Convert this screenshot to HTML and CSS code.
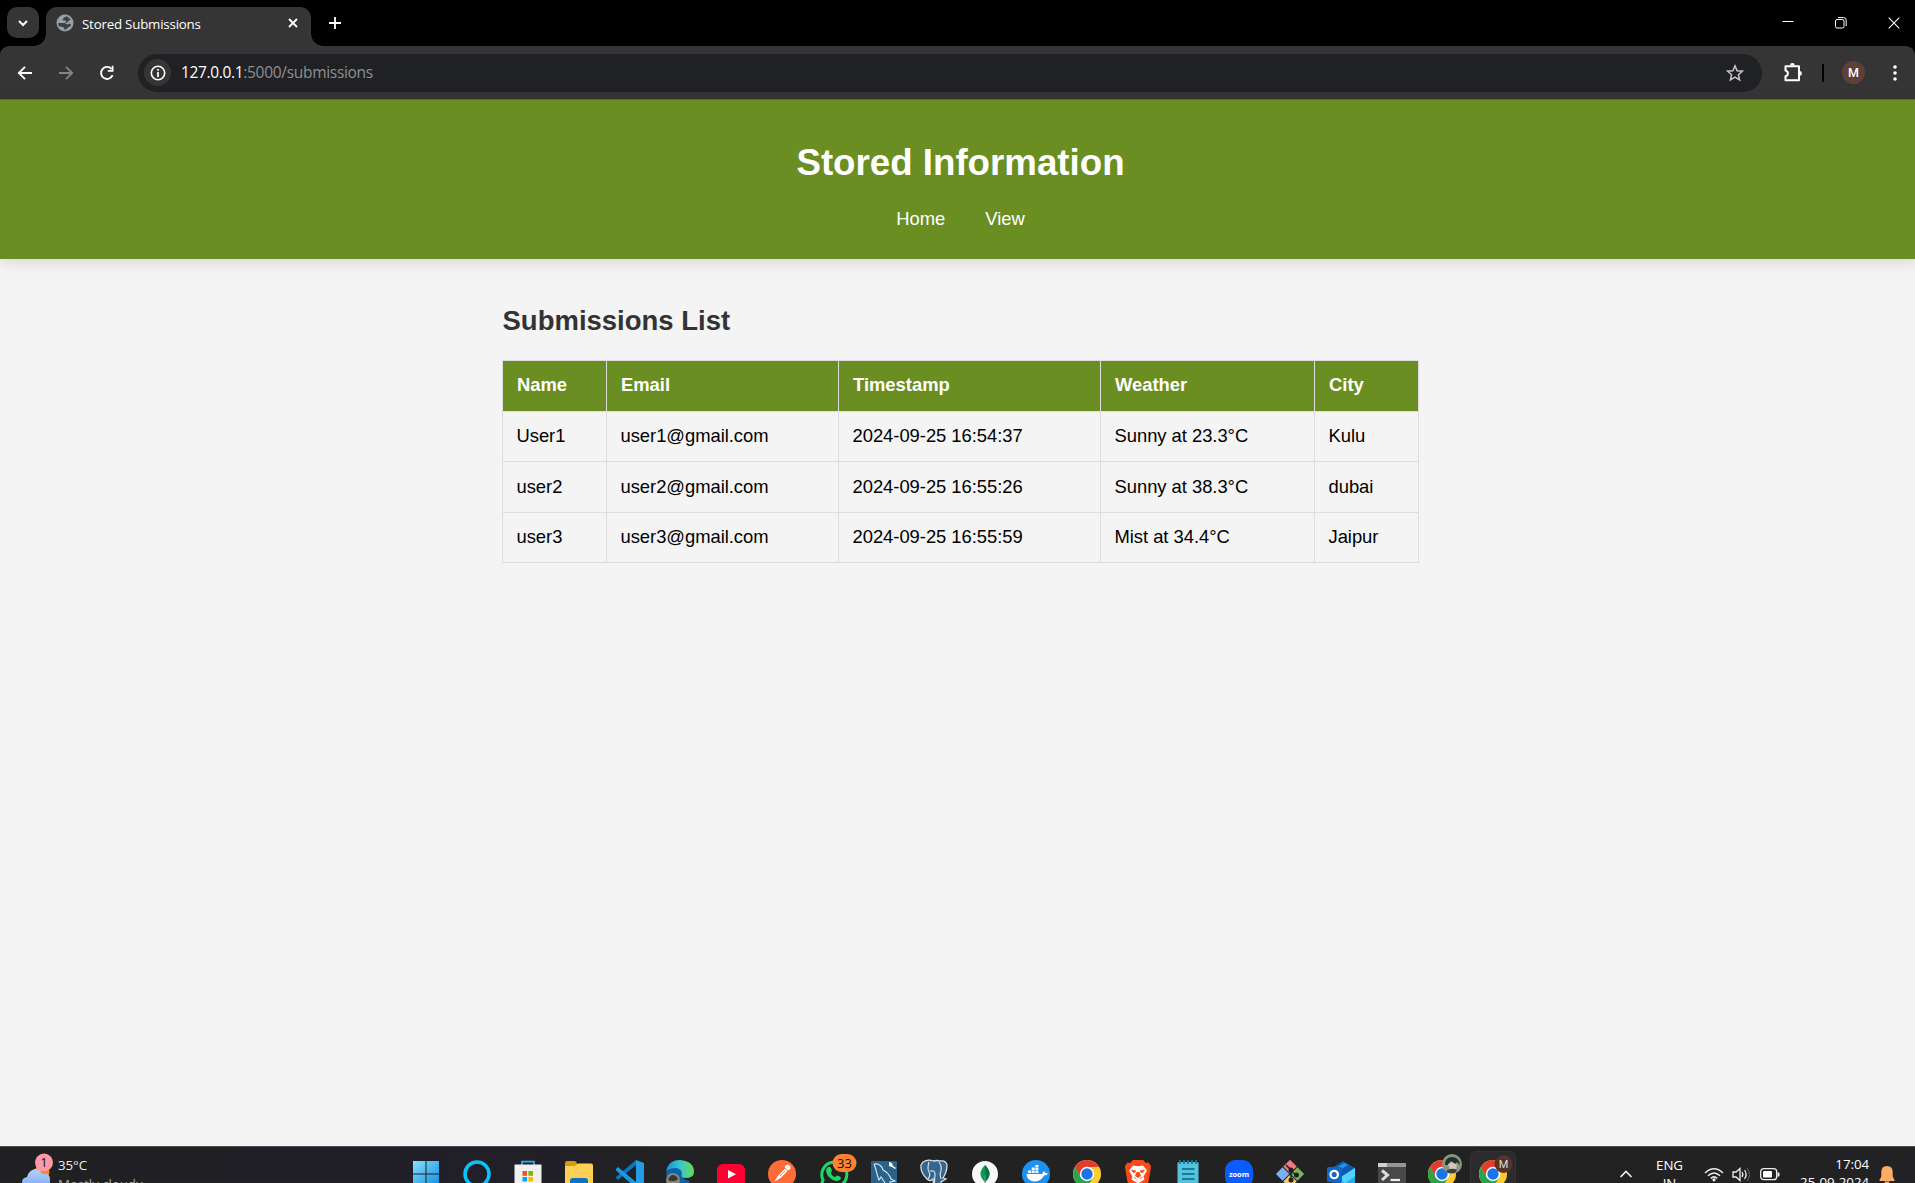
FILE: index.html
```html
<!DOCTYPE html>
<html lang="en">
<head>
<meta charset="utf-8">
<title>Stored Submissions</title>
<link rel="stylesheet" href="styles.css">
</head>
<body>
<div class="screen">
  <div class="tabstrip">
    <div class="tab-search"><svg width="12" height="12" viewBox="0 0 12 12"><path d="M2 4l4 4 4-4" fill="none" stroke="#fff" stroke-width="2"/></svg></div>
    <div class="tab">
      <svg class="favicon" width="18" height="18" viewBox="0 0 18 18"><circle cx="9" cy="9" r="8.500" fill="#9aa0a6"/><path d="M10.500 2.300Q7 3.500 6.500 6q2 .8 3.700.5.300 2-1.700 2.500H2.200q-.2 2 .8 3.500 3-.3 5 1.300l.5 2q3-.2 3.200-2.300 3-.5 3.300-3.500-2.500-.6-3.500.5-2-.3-2.500-1.200 3-.3 3.500-2.500l2.300-1Q13 3.500 10.500 2.300z" fill="#3c4043"/></svg>
      <span class="tab-title">Stored Submissions</span>
      <svg class="tab-close" width="10" height="10" viewBox="0 0 10 10"><path d="M1 1l8 8M9 1L1 9" stroke="#fff" stroke-width="1.800"/></svg>
    </div>
    <svg class="new-tab" width="12" height="12" viewBox="0 0 12 12"><path d="M6 0v12M0 6h12" stroke="#fff" stroke-width="1.800"/></svg>
    <div class="window-controls">
      <svg width="12" height="12" viewBox="0 0 12 12"><path d="M.5 4.500h11" stroke="#fff"/></svg>
      <svg width="12" height="12" viewBox="0 0 12 12"><rect x=".5" y="2.500" width="8.500" height="8.500" rx="1.500" fill="none" stroke="#fff"/><path d="M3 .6h5.500q2.700 0 2.700 2.700V9" fill="none" stroke="#fff"/></svg>
      <svg width="12" height="12" viewBox="0 0 12 12"><path d="M.7.700l10.600 10.600M11.300.700L.7 11.300" stroke="#fff" stroke-width="1.100"/></svg>
    </div>
  </div>
  <div class="toolbar">
    <div class="nav-buttons">
      <svg width="16" height="16" viewBox="0 0 16 16"><path d="M15 8H2M8 1.800L1.800 8 8 14.200" fill="none" stroke="#fff" stroke-width="1.800"/></svg>
      <svg width="16" height="16" viewBox="0 0 16 16"><path d="M1 8h13M8 1.800L14.200 8 8 14.200" fill="none" stroke="#858585" stroke-width="1.800"/></svg>
      <svg width="16" height="16" viewBox="0 0 16 16"><path d="M13.600 10.200A6 6 0 1 1 12.600 4" fill="none" stroke="#fff" stroke-width="1.900"/><path d="M14.500.7v6.100H8.800V5h3.900V.7z" fill="#fff"/></svg>
    </div>
    <div class="omnibox">
      <div class="site-info"><svg width="16" height="16" viewBox="0 0 16 16"><circle cx="8" cy="8" r="6.700" fill="none" stroke="#fff" stroke-width="1.600"/><path d="M8 7v5M8 4v1.800" stroke="#fff" stroke-width="1.700"/></svg></div>
      <div class="url"><span class="host">127.0.0.1</span><span class="path">:5000/submissions</span></div>
      <svg class="star" width="18" height="18" viewBox="0 0 18 18"><path d="M9 1.800l2.100 4.900 5.300.5-4 3.500 1.200 5.200L9 13.200l-4.600 2.700 1.200-5.200-4-3.500 5.300-.5z" fill="none" stroke="#c7c7c7" stroke-width="1.500"/></svg>
    </div>
    <svg class="extensions" width="20" height="20" viewBox="0 0 20 20"><path d="M2.500 3.200H16V17.300H2.500v-4q2.400-.8 2.400-2.900T2.500 7.500z" fill="none" stroke="#fff" stroke-width="2" stroke-linejoin="round"/><path d="M7 2.500a2.400 2.400 0 0 1 4.800 0zM16.500 8a2.300 2.300 0 0 1 0 4.800z" fill="#fff"/></svg>
    <div class="divider"></div>
    <div class="profile">M</div>
    <svg class="menu" width="4" height="16" viewBox="0 0 4 16"><g fill="#fff"><circle cx="2" cy="2" r="1.800"/><circle cx="2" cy="8" r="1.800"/><circle cx="2" cy="14" r="1.800"/></g></svg>
  </div>

  <div class="page">
    <header class="site-header">
      <h1>Stored Information</h1>
      <nav><a>Home</a><a>View</a></nav>
    </header>
    <main>
      <h2>Submissions List</h2>
      <table>
        <colgroup><col class="c-name"><col class="c-email"><col class="c-time"><col class="c-weather"><col class="c-city"></colgroup>
        <thead><tr><th>Name</th><th>Email</th><th>Timestamp</th><th>Weather</th><th>City</th></tr></thead>
        <tbody>
          <tr><td>User1</td><td>user1@gmail.com</td><td>2024-09-25 16:54:37</td><td>Sunny at 23.3°C</td><td>Kulu</td></tr>
          <tr><td>user2</td><td>user2@gmail.com</td><td>2024-09-25 16:55:26</td><td>Sunny at 38.3°C</td><td>dubai</td></tr>
          <tr><td>user3</td><td>user3@gmail.com</td><td>2024-09-25 16:55:59</td><td>Mist at 34.4°C</td><td>Jaipur</td></tr>
        </tbody>
      </table>
    </main>
  </div>

  <div class="taskbar">
    <div class="widget">
      <svg width="32" height="36" viewBox="0 0 32 36"><defs><linearGradient id="cl" x1="0" y1="0" x2="0" y2="1"><stop offset="0" stop-color="#b4d2fb"/><stop offset="1" stop-color="#7fabf0"/></linearGradient></defs><circle cx="20" cy="19" r="7.500" fill="#f58a1f"/><path d="M6 34q-6 0-6-5 0-4 5-5 2-7 8-8 5 0 7 5 8-1 8 5v8z" fill="url(#cl)"/><circle cx="22" cy="9.500" r="9" fill="#ff99a4"/><text x="22" y="14" text-anchor="middle" class="badge-text">1</text></svg>
      <div class="weather"><div>35°C</div><div class="dim">Mostly cloudy</div></div>
    </div>
    <div class="apps">
      <div><svg viewBox="0 0 28 28"><defs><linearGradient id="wn" x1="0" y1="0" x2="1" y2="1"><stop offset="0" stop-color="#87e0fc"/><stop offset="1" stop-color="#0c8ce0"/></linearGradient></defs><path d="M1 1h12.500v12.500H1zM14.500 1H27v12.500H14.500zM1 14.500h12.500V27H1zM14.500 14.500H27V27H14.500z" fill="url(#wn)"/></svg></div>
      <div><svg viewBox="0 0 28 28"><circle cx="14" cy="14" r="12" fill="none" stroke="#08c4fb" stroke-width="3.500"/></svg></div>
      <div><svg viewBox="0 0 28 28"><path d="M8 5V1.700h12V5" fill="none" stroke="#28b1ef" stroke-width="1.700"/><path d="M.5 4.500h27V28H.5z" fill="#f1f1f1"/><path fill="#f25022" d="M8.500 11H13v4.800H8.500z"/><path fill="#7fba00" d="M14.300 11h4.700v4.800h-4.700z"/><path fill="#00a4ef" d="M8.500 17H13v4.500H8.500z"/><path fill="#ffb900" d="M14.300 17h4.700v4.500h-4.700z"/></svg></div>
      <div><svg viewBox="0 0 28 28"><path d="M0 3q0-2 2-2h8l2 2v5H0z" fill="#d89a09"/><path d="M0 6h10l3-2.500h13q2 0 2 2V28H0z" fill="#fecf55"/><path d="M5 28v-7q0-3 3-3h12q3 0 3 3v7z" fill="#0e72c6"/><path d="M9 28v-5h11v5z" fill="#074c8f"/></svg></div>
      <div><svg viewBox="0 0 28 28"><path d="M20 5L2 20l-2-2V17L20 0z" fill="#0877bd"/><path d="M2 7l18 15v6L0 10.500V9z" fill="#149ae2"/><path d="M20 0l8 3v22l-8 3-3-2 3-4V8z" fill="#239de5"/></svg></div>
      <div><svg viewBox="0 0 28 28"><defs><linearGradient id="ed"><stop offset="0" stop-color="#1590dc"/><stop offset=".5" stop-color="#37c6ce"/><stop offset="1" stop-color="#65dc52"/></linearGradient></defs><path d="M0 14Q3 5 13 8q6 2 4 8-1 4 7 5-5 7-10 7Q2 28 0 14z" fill="#0c61ad"/><path d="M0 12Q2 0 14 0q14 1 14 12 0 6-9 6-5-1-3-4 0-5-6-6-7 0-10 4z" fill="url(#ed)"/><circle cx="7" cy="20" r="7" fill="#8b8471"/><path d="M2 20q2-5 5-5t5 4l-3 2H5z" fill="#34383a"/></svg></div>
      <div><svg viewBox="0 0 28 28"><rect y="4" width="28" height="23" rx="6" fill="#ff0033"/><path d="M11 10l8 4.200-8 4.300z" fill="#fff"/></svg></div>
      <div><svg viewBox="0 0 28 28"><circle cx="14" cy="14" r="14" fill="#ff6c37"/><path d="M6.500 21.500l3-5 7.500-8 2.500 2.500-7 7z" fill="#fff"/><circle cx="19.700" cy="7.500" r="2.800" fill="#fff"/><path d="M12 16l5-5M17 8l3 3" stroke="#ff6c37" stroke-width=".9"/></svg></div>
      <div><svg viewBox="0 0 28 28"><path d="M1.500 27L4 20A12.500 12.500 0 1 1 10 26z" fill="none" stroke="#1fd564" stroke-width="3"/><path d="M9 7q3-1 4 4l-1.300 2q1.300 3 4.300 4l2-1.500q4 1 4 3-2 4-8 1.500-7-4-7-10 .5-2 2-3z" fill="#1fd564"/><rect x="13.500" y="-6" width="24" height="18" rx="9" fill="#ff8232"/><text x="25.500" y="7.500" text-anchor="middle" class="badge-text">33</text></svg></div>
      <div><svg viewBox="0 0 28 28"><rect x="1" y="1" width="26" height="29" rx="1" fill="#27638a"/><path d="M4 4q7-1 9 6 6 3 8 9l4 2-5 1 2 6M4 4q2 5 3 10l2 6 2-3 4 6" fill="none" stroke="#dce7ee" stroke-width="1.100"/><path d="M19 2l3 1 1 3 3 2-1 1-3-2-3-1z" fill="#fff"/></svg></div>
      <div><svg viewBox="0 0 28 28"><path d="M3 2Q8-1 13 1q4-1 7 0 6-1 7 4 0 7-4 13l3 1-5 3-1 6h-6l-1-9q-3 3-6 0Q0 12 1 5z" fill="#35668f" stroke="#d6e0e8" stroke-width="1.300"/><path d="M9 2Q7 9 9 12t-1 7M19 2q4 5 1 12l1 5M10 11q5-1 5 3l-1 14" fill="none" stroke="#d6e0e8" stroke-width="1.200"/></svg></div>
      <div><svg viewBox="0 0 28 28"><circle cx="14" cy="14" r="13" fill="#f8f8f8"/><path d="M14 5q9 9 0 17-9-8 0-17z" fill="#0b9954"/><path d="M14 5q9 9 0 17z" fill="#08744a"/><path d="M14 15v10" stroke="#768d80"/></svg></div>
      <div><svg viewBox="0 0 28 28"><circle cx="14" cy="14" r="14" fill="#1d91f0"/><path d="M4.500 14H20l2-3 1.500 2 2.500.5q-1 2-4 2-3 6-10 6-7-.5-7.500-7.500zM6 10.500h3V13H6zM9.700 10.500h3V13h-3zM13.400 10.500h3V13h-3zM9.700 7.500h3V10h-3zM13.400 7.500h3V10h-3zM13.400 5h3v2h-3z" fill="#fff"/></svg></div>
      <div><svg viewBox="0 0 28 28"><g id="chrome"><circle cx="14" cy="14" r="14" fill="#ffcb2f"/><path d="M1.900 7A14 14 0 0 1 26.100 7H14L8 17.500z" fill="#e33b2e"/><path d="M1.900 7A14 14 0 0 0 14 28l6-10.500H8z" fill="#2ba24c"/><circle cx="14" cy="14" r="7.200" fill="#fff"/><circle cx="14" cy="14" r="5.700" fill="#1a73e8"/></g></svg></div>
      <div><svg viewBox="0 0 28 28"><path d="M9 0h10l3 3 2.500-.5L27 6l-.5 4-2 12-6 6h-9l-6-6-2-12L1 6l2.500-3.500L6 3z" fill="#fb4a17"/><path d="M9 5.500l5 .8 5-.8 4 5-3.500 6 1 3L14 23.500l-6.500-4 1-3L5 10.500z" fill="#fff"/><path d="M7.500 10l4.500 1-2 2zM20.500 10l-4.500 1 2 2zM12.500 12.500h3l1 3.500-2.500 1.500-2.500-1.500zM10 17l2.500 2M18 17l-2.500 2" fill="#fb4a17" stroke="#fb4a17" stroke-width=".8"/></svg></div>
      <div><svg viewBox="0 0 28 28"><rect x="3.500" y="2" width="21" height="28" rx="1.500" fill="#55c2de"/><path d="M8 9h12.500M8 14h12.500M8 19h12.500" stroke="#086183" stroke-width="1.700"/><path d="M6 0v4M10 0v4M14 0v4M18 0v4M22 0v4" stroke="#16779a" stroke-width="1.800"/></svg></div>
      <div><svg viewBox="0 0 28 28"><rect width="28" height="28" rx="11" fill="#0b5cff"/><text x="14" y="16.500" text-anchor="middle" class="zoom-text" textLength="20">zoom</text></svg></div>
      <div><svg viewBox="0 0 28 28"><g transform="rotate(45 14 14)"><path d="M4 4h9.500v9.500H4z" fill="#f07a7c"/><path d="M14.500 4H24v9.500h-9.500z" fill="#7ab657"/><path d="M4 14.500h9.500V24H4z" fill="#7badf8"/><path d="M14.500 14.500H24V24h-9.500z" fill="#f0ca68"/></g><path d="M10 5l5 5v12M15 11l5 4" stroke="#211f22" stroke-width="1.500" fill="none"/><g fill="#211f22"><circle cx="15" cy="10" r="2.500"/><circle cx="20.500" cy="15" r="2.500"/><circle cx="15" cy="20" r="2.500"/></g></svg></div>
      <div><svg viewBox="0 0 28 28"><path d="M5 8L16 1l12 7v20H5z" fill="#0a5bb1"/><path d="M9 8l8-5 4 2-12 7z" fill="#2f8fdc"/><path d="M14 17L28 8v20H14z" fill="#24aee9"/><path d="M14 17l14-9v8L17 24z" fill="#53d2fb"/><rect x="0" y="7" width="15" height="15" rx="1.500" fill="#0c68c4"/><circle cx="7.200" cy="14.500" r="3.700" fill="none" stroke="#fff" stroke-width="2.300"/></svg></div>
      <div><svg viewBox="0 0 28 28"><path d="M0 3h28v25H0z" fill="#484848"/><path d="M0 3h28v4H0z" fill="#969696"/><path d="M0 3h9v4H0z" fill="#d0d0d0"/><path d="M4 10.500l5.500 4.500L4 20" fill="none" stroke="#ddd" stroke-width="3"/><path d="M12.500 20H22" stroke="#eee" stroke-width="2.200"/></svg></div>
      <div><svg viewBox="0 0 28 28"><use href="#chrome"/><circle cx="24" cy="4" r="10" fill="#8b9682"/><path d="M17 5q0-8 7-8t8 8l-3-3-2 2-4-3-3 4z" fill="#253033"/><path d="M20 4l4-2 5 3-1 4h-6z" fill="#d6c6b6"/><path d="M18 11q6-4 11-1l-2 3h-7z" fill="#33433f"/></svg></div>
      <div class="active"><svg viewBox="0 0 28 28"><use href="#chrome"/><circle cx="24.500" cy="4" r="9" fill="#553329"/><text x="24.500" y="8" text-anchor="middle" class="m-text">M</text></svg></div>
    </div>
    <div class="tray">
      <svg class="chev" width="14" height="8" viewBox="0 0 14 8"><path d="M1.500 7L7 1.500 12.500 7" fill="none" stroke="#eee" stroke-width="1.700"/></svg>
      <div class="lang"><div>ENG</div><div>IN</div></div>
      <svg class="wifi" width="20" height="15" viewBox="0 0 20 15"><g fill="none" stroke="#eee" stroke-width="1.500"><path d="M1 6Q10-2.500 19 6M4 8.800q6-5.600 12 0M6.800 11.400q3.200-3 6.400 0"/></g><circle cx="10" cy="12.800" r="1.600" fill="#eee"/></svg>
      <svg class="volume" width="19" height="15" viewBox="0 0 19 15"><path d="M1 5h3l4-3.500v12L4 10H1z" fill="none" stroke="#eee" stroke-width="1.300"/><path d="M10 5q1.800 2.500 0 5M12.500 3q3.300 4.500 0 9" fill="none" stroke="#eee" stroke-width="1.200"/><path d="M15 1q5 6.500 0 13" fill="none" stroke="#666"/></svg>
      <svg class="battery" width="20" height="13" viewBox="0 0 20 13"><rect x=".7" y=".7" width="16" height="11" rx="3" fill="none" stroke="#eee" stroke-width="1.300"/><rect x="3" y="3" width="9" height="6.500" rx="1" fill="#fff"/><path d="M17.500 4l2 1v3l-2 1z" fill="#eee"/></svg>
      <div class="clock"><div>17:04</div><div>25-09-2024</div></div>
      <svg class="bell" width="16" height="18" viewBox="0 0 16 18"><path d="M2.300 6q0-6 5.700-6t5.700 6v4.500L15.500 14v1H.5v-1l1.800-3.500zM5.500 15.500h5Q10 18 8 18t-2.500-2.500z" fill="#ffac66"/></svg>
    </div>
  </div>
</div>
</body>
</html>
```
FILE: styles.css
```css
* { box-sizing: border-box; }
body { margin: 0; overflow: hidden; background: #000; }
svg { display: block; flex: none; overflow: visible; }
.screen { width: 100vw; height: 100vh; overflow: hidden; display: flex; flex-direction: column; font-family: "Open Sans", "Noto Sans", sans-serif; color: #fff; }

.tabstrip { height: 46px; flex: none; display: flex; align-items: flex-start; background: #000; }
.tab-search { width: 32px; height: 31px; margin: 7px 7px 0; border-radius: 10px; background: #353535; display: grid; place-items: center; }
.tab { position: relative; width: 265px; height: 39px; margin-top: 7px; padding: 0 13px 7px 10px; display: flex; align-items: center; background: #353535; border-radius: 11px 11px 0 0; }
.tab::before, .tab::after { content: ""; position: absolute; bottom: 0; width: 12px; height: 12px; }
.tab::before { left: -12px; background: radial-gradient(circle at 0 0, transparent 11.500px, #353535 12px); }
.tab::after { right: -12px; background: radial-gradient(circle at 100% 0, transparent 11.500px, #353535 12px); }
.tab-title { margin-left: 8px; padding-top: 2px; font-size: 13.300px; line-height: 20px; letter-spacing: -0.200px; white-space: nowrap; }
.tab-close { margin-left: auto; }
.new-tab { margin: 17px 0 0 18px; }
.window-controls { margin: 17px 15px 0 auto; display: flex; gap: 41px; }

.toolbar { height: 54px; flex: none; display: flex; align-items: center; background: #353535; border-bottom: 1px solid #626262; border-radius: 9px 9px 0 0; }
.nav-buttons { width: 138px; flex: none; padding-left: 17px; display: flex; gap: 25px; }
.omnibox { width: 1624px; flex: none; height: 38px; padding: 0 18px 0 6px; display: flex; align-items: center; background: #202124; border-radius: 19px; }
.site-info { width: 27px; height: 27px; border-radius: 50%; background: #353535; display: grid; place-items: center; }
.url { margin-left: 10px; padding-bottom: 1px; font-size: 15.500px; white-space: nowrap; }
.host { letter-spacing: -0.350px; }
.path { color: #8f8f8f; letter-spacing: -0.300px; }
.star { margin-left: auto; }
.extensions { margin-left: 21px; }
.divider { width: 2px; height: 18px; margin-left: 19px; background: #000; }
.profile { width: 23px; height: 23px; margin-left: 18px; border-radius: 50%; background: #5d4037; font: 12.500px/23px Roboto, sans-serif; font-weight: 500; text-align: center; }
.menu { margin-left: 28px; }

.page { flex: 1; min-height: 0; width: 1920px; background: #f4f4f4; color: #000; font: 18.400px/24px "Liberation Sans", Arial, sans-serif; }
.site-header { height: 159px; padding: 42px 0 0 1px; background: #6b8e23; color: #fff; text-align: center; box-shadow: 0 3px 14px rgba(0,0,0,.12); }
h1 { margin: 0; font-size: 36.700px; line-height: 42px; }
nav { display: flex; justify-content: center; gap: 40px; margin-top: 23px; }
main { width: 917px; margin: 44px auto 0; }
h2 { margin: 0 0 0 1px; color: #333; font-size: 27.500px; line-height: 36px; }
table { table-layout: fixed; width: 917px; margin-top: 21px; border-collapse: collapse; }
.c-name, .c-city { width: 104px; }
.c-email { width: 232px; }
.c-time { width: 262px; }
.c-weather { width: 214px; }
th, td { height: 50.500px; padding: 0 14px; border: 1px solid #ddd; text-align: left; white-space: nowrap; }
td { letter-spacing: -0.030px; }
th { padding: 0 14px 1px 14.500px; background: #6b8e23; color: #fff; }

.taskbar { height: 37px; flex: none; overflow: hidden; display: flex; align-items: flex-start; background: linear-gradient(90deg, #202022, #211f28 25%, #222223 38%, #222224); border-top: 1px solid #4b4b4e; }
.widget { width: 401px; flex: none; padding: 6px 0 0 22px; display: flex; font-size: 13.300px; line-height: 19px; }
.weather { margin: 3px 0 0 4px; color: #eee; letter-spacing: -0.050px; }
.dim { color: #aaa; }
.badge-text { font-size: 13px; fill: #111; }
.apps { display: flex; }
.apps > div { width: 50.800px; padding-top: 13px; display: flex; justify-content: center; }
.apps svg { width: 28px; height: 28px; }
.apps .active { width: 46px; height: 48px; margin: 4px 2.400px 0; padding-top: 8px; background: #2b2b2d; border: 1px solid #343436; border-radius: 6px; }
.zoom-text { font: bold 7.500px "Open Sans", sans-serif; fill: #fff; }
.m-text { font: 11px Roboto, sans-serif; fill: #ddd; }
.tray { flex: 1; display: flex; font-size: 13.300px; line-height: 18px; letter-spacing: -0.050px; color: #fff; }
.chev { margin: 23px 0 0 100px; }
.lang { width: 50px; margin: 9px 0 0 12px; text-align: center; }
.wifi { margin: 20px 0 0 9px; }
.volume { margin: 20px 0 0 8px; }
.battery { margin: 21px 0 0 9px; }
.clock { flex: 1; margin-top: 8px; text-align: right; white-space: nowrap; }
.bell { margin: 19px 20px 0 10px; }
```
